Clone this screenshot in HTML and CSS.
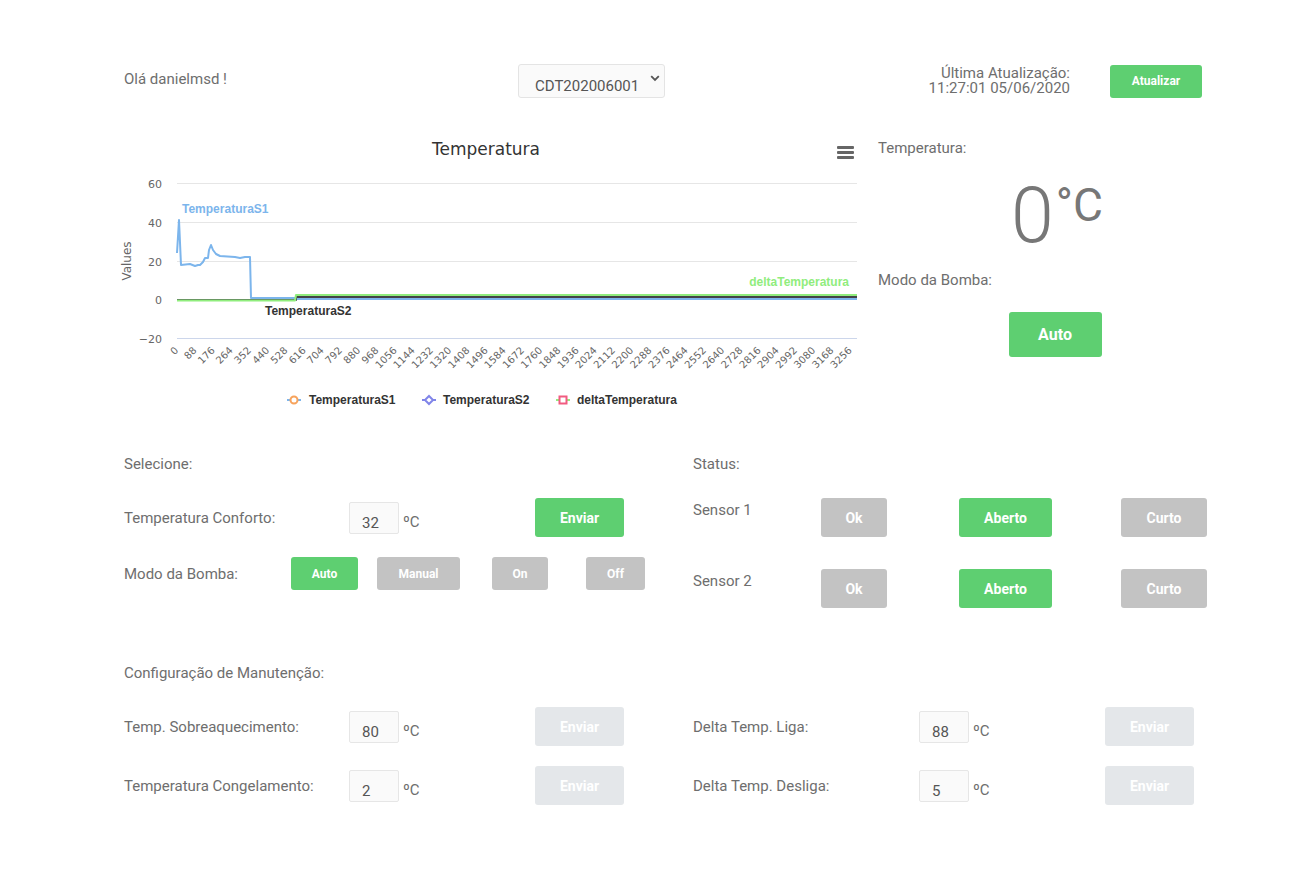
FILE: index.html
```html
<!DOCTYPE html>
<html lang="pt-BR">
<head>
<meta charset="utf-8">
<title>Painel</title>
<link rel="stylesheet" href="styles.css">
</head>
<body>
<div class="page">
  <header class="header">
    <div class="greeting">Olá danielmsd !</div>
    <div class="select-wrap">
      <select class="device-select"><option>CDT202006001</option></select>
      <svg class="chevron" viewBox="0 0 10 7"><path d="M1.2 1.2 L5 5 L8.8 1.2" fill="none" stroke="#555" stroke-width="1.8"/></svg>
    </div>
    <div class="header-right">
      <div class="update-info"><div>Última Atualização:</div><div>11:27:01 05/06/2020</div></div>
      <button class="btn btn-green btn-update">Atualizar</button>
    </div>
  </header>

  <section class="overview">
    <svg class="chart" viewBox="0 0 760 290" width="760" height="290">
      <text class="c-title" x="376" y="25" text-anchor="middle">Temperatura</text>
      <g fill="#666">
        <rect x="727" y="16" width="17" height="3" rx="1"/>
        <rect x="727" y="21" width="17" height="3" rx="1"/>
        <rect x="727" y="26" width="17" height="3" rx="1"/>
      </g>
      <g stroke="#e6e6e6" stroke-width="1">
        <line x1="67" y1="53.5" x2="747" y2="53.5"/>
        <line x1="67" y1="92.5" x2="747" y2="92.5"/>
        <line x1="67" y1="131.5" x2="747" y2="131.5"/>
        <line x1="67" y1="169.5" x2="747" y2="169.5"/>
      </g>
      <line x1="67" y1="208.5" x2="747" y2="208.5" stroke="#ccd6eb" stroke-width="1"/>
      <g class="c-axis" text-anchor="end">
        <text x="52" y="58">60</text>
        <text x="52" y="97">40</text>
        <text x="52" y="136">20</text>
        <text x="52" y="174">0</text>
        <text x="52" y="213">−20</text>
      </g>
      <text class="c-axis c-values" transform="translate(21,131) rotate(-90)" text-anchor="middle">Values</text>
      <g class="c-xaxis" text-anchor="end">
        <text transform="translate(69,221) rotate(-45)">0</text>
        <text transform="translate(87.2,221) rotate(-45)">88</text>
        <text transform="translate(105.4,221) rotate(-45)">176</text>
        <text transform="translate(123.6,221) rotate(-45)">264</text>
        <text transform="translate(141.8,221) rotate(-45)">352</text>
        <text transform="translate(160,221) rotate(-45)">440</text>
        <text transform="translate(178.2,221) rotate(-45)">528</text>
        <text transform="translate(196.4,221) rotate(-45)">616</text>
        <text transform="translate(214.6,221) rotate(-45)">704</text>
        <text transform="translate(232.8,221) rotate(-45)">792</text>
        <text transform="translate(251,221) rotate(-45)">880</text>
        <text transform="translate(269.2,221) rotate(-45)">968</text>
        <text transform="translate(287.4,221) rotate(-45)">1056</text>
        <text transform="translate(305.6,221) rotate(-45)">1144</text>
        <text transform="translate(323.8,221) rotate(-45)">1232</text>
        <text transform="translate(342,221) rotate(-45)">1320</text>
        <text transform="translate(360.2,221) rotate(-45)">1408</text>
        <text transform="translate(378.4,221) rotate(-45)">1496</text>
        <text transform="translate(396.6,221) rotate(-45)">1584</text>
        <text transform="translate(414.8,221) rotate(-45)">1672</text>
        <text transform="translate(433,221) rotate(-45)">1760</text>
        <text transform="translate(451.2,221) rotate(-45)">1848</text>
        <text transform="translate(469.4,221) rotate(-45)">1936</text>
        <text transform="translate(487.6,221) rotate(-45)">2024</text>
        <text transform="translate(505.8,221) rotate(-45)">2112</text>
        <text transform="translate(524,221) rotate(-45)">2200</text>
        <text transform="translate(542.2,221) rotate(-45)">2288</text>
        <text transform="translate(560.4,221) rotate(-45)">2376</text>
        <text transform="translate(578.6,221) rotate(-45)">2464</text>
        <text transform="translate(596.8,221) rotate(-45)">2552</text>
        <text transform="translate(615,221) rotate(-45)">2640</text>
        <text transform="translate(633.2,221) rotate(-45)">2728</text>
        <text transform="translate(651.4,221) rotate(-45)">2816</text>
        <text transform="translate(669.6,221) rotate(-45)">2904</text>
        <text transform="translate(687.8,221) rotate(-45)">2992</text>
        <text transform="translate(706,221) rotate(-45)">3080</text>
        <text transform="translate(724.2,221) rotate(-45)">3168</text>
        <text transform="translate(742.4,221) rotate(-45)">3256</text>
      </g>
      <g fill="none" stroke-width="2" stroke-linejoin="round">
        <path stroke="#7cb5ec" d="M67 123 L69 90 L71 135 L80 134 L85 136 L88 135 L90 135 L93 132 L95 128 L98 128 L99 120 L101 115 L103 120 L106 124 L110 126 L125 127 L130 128 L135 127 L140 127 L141 168 L186 168 L186 169 L747 169"/>
        <path stroke="#434348" d="M67 170 L186 170 L186 167 L747 167"/>
        <path stroke="#90ed7d" d="M67 170.5 L185 170.5 L186 165 L747 165"/>
      </g>
      <text class="c-dlabel" x="72" y="83" fill="#7cb5ec">TemperaturaS1</text>
      <text class="c-dlabel" x="155" y="185" fill="#333">TemperaturaS2</text>
      <text class="c-dlabel" x="739" y="156" fill="#90ed7d" text-anchor="end">deltaTemperatura</text>
      <g class="c-legend">
        <line x1="177" y1="270" x2="191" y2="270" stroke="#7cb5ec" stroke-width="2"/>
        <circle cx="184" cy="270" r="3.5" fill="#fff" stroke="#f7a35c" stroke-width="2"/>
        <text x="199" y="274">TemperaturaS1</text>
        <line x1="312" y1="270" x2="326" y2="270" stroke="#8085e9" stroke-width="2"/>
        <path d="M319 266 L323 270 L319 274 L315 270 Z" fill="#fff" stroke="#8085e9" stroke-width="2"/>
        <text x="333" y="274">TemperaturaS2</text>
        <line x1="446" y1="270" x2="460" y2="270" stroke="#90ed7d" stroke-width="2"/>
        <rect x="449.5" y="266.5" width="7" height="7" fill="#fff" stroke="#f15c80" stroke-width="2"/>
        <text x="467" y="274">deltaTemperatura</text>
      </g>
    </svg>

    <aside class="side">
      <div class="label">Temperatura:</div>
      <div class="big-temp"><span class="big-num">0</span><span class="big-unit">°C</span></div>
      <div class="label side-mode">Modo da Bomba:</div>
      <button class="btn btn-green btn-big">Auto</button>
    </aside>
  </section>

  <section class="controls">
    <div class="col-left">
      <div class="label">Selecione:</div>
      <div class="form-row">
        <div class="label">Temperatura Conforto:</div>
        <input class="num-input" type="text" value="32">
        <span class="unit">ºC</span>
        <button class="btn btn-green btn-send">Enviar</button>
      </div>
      <div class="mode-row">
        <div class="label">Modo da Bomba:</div>
        <button class="btn btn-green btn-mode w-auto">Auto</button>
        <button class="btn btn-grey btn-mode w-manual">Manual</button>
        <button class="btn btn-grey btn-mode w-on">On</button>
        <button class="btn btn-grey btn-mode w-off">Off</button>
      </div>
    </div>
    <div class="col-right">
      <div class="label">Status:</div>
      <div class="status-row">
        <div class="label sensor-label">Sensor 1</div>
        <button class="btn btn-grey btn-status w-ok">Ok</button>
        <button class="btn btn-green btn-status w-aberto">Aberto</button>
        <button class="btn btn-grey btn-status w-curto">Curto</button>
      </div>
      <div class="status-row status-row-2">
        <div class="label sensor-label">Sensor 2</div>
        <button class="btn btn-grey btn-status w-ok">Ok</button>
        <button class="btn btn-green btn-status w-aberto">Aberto</button>
        <button class="btn btn-grey btn-status w-curto">Curto</button>
      </div>
    </div>
  </section>

  <section class="config">
    <div class="label">Configuração de Manutenção:</div>
    <div class="config-cols">
      <div class="col-left">
        <div class="form-row">
          <div class="label">Temp. Sobreaquecimento:</div>
          <input class="num-input" type="text" value="80">
          <span class="unit">ºC</span>
          <button class="btn btn-disabled btn-send">Enviar</button>
        </div>
        <div class="form-row form-row-2">
          <div class="label">Temperatura Congelamento:</div>
          <input class="num-input" type="text" value="2">
          <span class="unit">ºC</span>
          <button class="btn btn-disabled btn-send">Enviar</button>
        </div>
      </div>
      <div class="col-right">
        <div class="form-row form-row-r">
          <div class="label">Delta Temp. Liga:</div>
          <input class="num-input" type="text" value="88">
          <span class="unit">ºC</span>
          <button class="btn btn-disabled btn-send">Enviar</button>
        </div>
        <div class="form-row form-row-r form-row-2">
          <div class="label">Delta Temp. Desliga:</div>
          <input class="num-input" type="text" value="5">
          <span class="unit">ºC</span>
          <button class="btn btn-disabled btn-send">Enviar</button>
        </div>
      </div>
    </div>
  </section>
</div>
</body>
</html>
```

FILE: styles.css
```css
* { box-sizing: border-box; }

body {
  margin: 0;
  background: #ffffff;
  font-family: Roboto, "Liberation Sans", Arial, sans-serif;
  font-size: 15px;
  color: #6e6e6e;
}

.page {
  width: 1300px;
  padding-top: 64px;
  padding-bottom: 60px;
}

.label { line-height: 18px; }

/* header */
.header {
  display: flex;
  align-items: center;
  height: 34px;
  padding-left: 124px;
  padding-right: 98px;
}
.greeting {
  width: 394px;
  line-height: 18px;
  padding-bottom: 4px;
}
.select-wrap {
  position: relative;
  width: 147px;
  height: 34px;
}
.device-select {
  -webkit-appearance: none;
  appearance: none;
  width: 100%;
  height: 100%;
  border: 1px solid #e4e4e4;
  border-radius: 3px;
  background: #fafafa;
  font-family: Roboto, "Liberation Sans", Arial, sans-serif;
  font-size: 15px;
  color: #555;
  padding: 10px 0 0 16px;
  outline: none;
}
.chevron {
  position: absolute;
  right: 5px;
  top: 11px;
  width: 10px;
  height: 7px;
  pointer-events: none;
}
.header-right {
  flex: 1;
  display: flex;
  justify-content: flex-end;
  align-items: center;
}
.update-info {
  text-align: right;
  line-height: 15px;
  margin-right: 40px;
}
.update-info div { height: 15px; line-height: 14px; }

/* buttons */
.btn {
  border: none;
  border-radius: 3px;
  color: #ffffff;
  font-family: Roboto, "Liberation Sans", Arial, sans-serif;
  font-weight: 700;
  display: inline-flex;
  align-items: center;
  justify-content: center;
  padding: 0;
  cursor: pointer;
}
.btn-green { background: #5ecf71; }
.btn-grey { background: #c3c3c3; }
.btn-disabled { background: #e4e7ea; }

.btn-update { width: 92px; height: 33px; font-size: 12px; }
.btn-big { width: 93px; height: 45px; font-size: 16px; }
.btn-send { width: 89px; height: 39px; font-size: 14px; }
.btn-mode { height: 33px; font-size: 12px; }
.w-auto { width: 67px; }
.w-manual { width: 83px; }
.w-on { width: 56px; }
.w-off { width: 59px; }
.btn-status { height: 39px; font-size: 14px; }
.w-ok { width: 66px; }
.w-aberto { width: 93px; }
.w-curto { width: 86px; }

/* chart + side */
.overview {
  display: flex;
  margin-top: 32px;
  padding-left: 110px;
}
.chart {
  display: block;
  width: 760px;
  height: 290px;
}
.c-title {
  font-family: "DejaVu Sans", sans-serif;
  font-size: 17px;
  fill: #333333;
}
.c-axis {
  font-family: "DejaVu Sans", sans-serif;
  font-size: 11px;
  fill: #666666;
}
.c-values { font-size: 12px; }
.c-xaxis {
  font-family: "DejaVu Sans", sans-serif;
  font-size: 10px;
  fill: #666666;
}
.c-dlabel {
  font-family: "Liberation Sans", Arial, sans-serif;
  font-size: 12px;
  font-weight: 700;
}
.c-legend text {
  font-family: "Liberation Sans", Arial, sans-serif;
  font-size: 12px;
  font-weight: 700;
  fill: #333333;
}

.side {
  width: 358px;
  margin-left: 8px;
  padding-top: 9px;
  text-align: center;
}
.side .label { text-align: left; }
.big-temp {
  display: flex;
  justify-content: center;
  align-items: flex-start;
  margin-top: 21px;
  margin-left: 0;
  height: 77px;
  color: #777777;
}
.big-num {
  font-size: 77px;
  line-height: 77px;
  font-weight: 300;
}
.big-unit {
  font-size: 46px;
  line-height: 46px;
  margin-top: 4px;
  margin-left: 2px;
  font-weight: 400;
}
.side-mode { margin-top: 16px; }
.side .btn-big { margin-top: 23px; margin-left: -4px; }

/* controls */
.controls {
  display: flex;
  margin-top: 35px;
  padding-left: 124px;
}
.col-left { width: 569px; }
.col-right { flex: 1; }

.form-row {
  display: grid;
  grid-template-columns: 225px 50px 136px 89px;
  align-items: center;
  height: 39px;
  margin-top: 25px;
}
.form-row-2 { margin-top: 20px; }
.form-row-r { grid-template-columns: 226px 50px 136px 89px; }

.num-input {
  width: 50px;
  height: 32px;
  border: 1px solid #e6e6e6;
  border-radius: 2px;
  background: #fafafa;
  font-family: Roboto, "Liberation Sans", Arial, sans-serif;
  font-size: 15px;
  color: #555555;
  padding: 10px 0 0 12px;
  outline: none;
}
.unit {
  padding-left: 4px;
  padding-top: 8px;
  line-height: 18px;
}

.mode-row {
  display: grid;
  grid-template-columns: 167px 86px 115px 94px auto;
  align-items: center;
  justify-items: start;
  height: 33px;
  margin-top: 20px;
}

.status-row {
  display: grid;
  grid-template-columns: 128px 138px 162px auto;
  align-items: start;
  justify-items: start;
  margin-top: 25px;
}
.status-row-2 { margin-top: 32px; }
.sensor-label { padding-top: 3px; }

/* config */
.config {
  margin-top: 56px;
  padding-left: 124px;
}
.config-cols { display: flex; }
```
